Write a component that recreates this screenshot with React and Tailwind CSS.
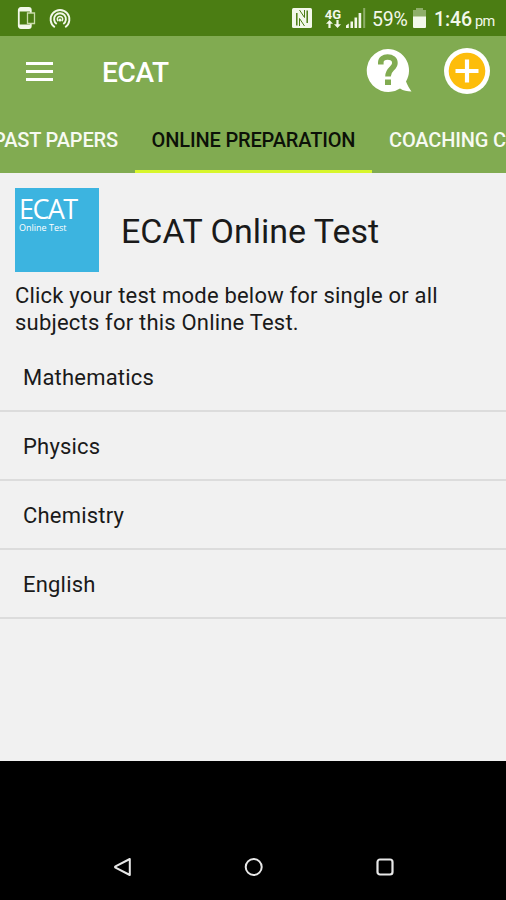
import clsx from "clsx";

const TABS = [
  { label: "PAST PAPERS", className: "w-[135px] justify-end pr-[17px]" },
  {
    label: "ONLINE PREPARATION",
    className: "w-[237px] justify-center",
    active: true,
  },
  { label: "COACHING CENTERS", className: "w-[220px] pl-[17px]" },
];

const SUBJECTS = ["Mathematics", "Physics", "Chemistry", "English"];

function StatusBar() {
  return (
    <div className="flex h-9 items-center bg-[#4b7d13] text-[#f3f8ea]">
      <svg className="ml-[17px] h-6 w-[19px]" viewBox="0 0 19 24" fill="none">
        <rect x="1.800" y="2" width="12" height="20" rx="2" stroke="currentColor" strokeWidth="1.800" />
        <path d="M2 2h12v3.500H2zM2 18.500h12V22H2z" fill="currentColor" />
        <path d="M10.500 7h7v10.500h-7z" fill="#4b7d13" stroke="#c9dba9" strokeWidth="1.300" />
      </svg>
      <svg className="ml-[13px] mt-px h-6 w-[22px]" viewBox="0 0 22 24" fill="none" stroke="currentColor" strokeWidth="1.900">
        <path d="M5.800 20.200a9.400 9.400 0 1 1 10.400 0" />
        <path d="M7.700 17a5.900 5.900 0 1 1 6.600 0" />
        <path d="M9.300 14.200a2.700 2.700 0 1 1 3.400 0" strokeWidth="1.500" />
        <circle cx="11" cy="13" r="1.500" fill="currentColor" stroke="none" />
      </svg>

      <svg className="ml-[221px] h-5 w-5" viewBox="0 0 20 20" fill="none">
        <rect width="20" height="20" rx="1.500" fill="currentColor" />
        <path d="M4.800 17.500V5M15.200 15V2.500" stroke="#4b7d13" strokeWidth="1.500" />
        <path d="M7.500 2l5 7.500V2M7.500 18v-7.500l5 7.500" stroke="#4b7d13" strokeWidth="1" />
      </svg>
      <div className="ml-[12px] flex w-[18px] flex-col items-center">
        <span className="text-[13px] font-bold leading-[11px]">4G</span>
        <svg className="h-2 w-[15px]" viewBox="0 0 15 8" fill="currentColor">
          <path d="M3.500 0 7 3.800H4.600V8H2.400V3.800H0zM11.500 8 15 4.200h-2.400V0h-2.200v4.200H8z" />
        </svg>
      </div>
      <svg className="ml-[4px] h-5 w-[20px]" viewBox="0 0 20 20" fill="currentColor">
        <path d="M0 20v-2.500l2.800-2V20zM4.500 13.500h2.500V20H4.500zM8.500 9.500h2.600V20H8.500zM12.600 5h2.600v15h-2.600z" />
        <path d="M17.200 0h2v20h-2z" opacity="0.400" />
      </svg>
      <span className="ml-[6px] mt-1 w-[36px] whitespace-nowrap text-[19.500px] tracking-[-0.2px]">
        59%
      </span>
      <svg className="ml-[5px] h-5 w-[13px]" viewBox="0 0 13 20" fill="currentColor">
        <path d="M3 0h7v2h3v7H0V2h3z" opacity="0.400" />
        <path d="M0 8.500h13V19a1 1 0 0 1-1 1H1a1 1 0 0 1-1-1z" />
      </svg>
      <div className="ml-[8px] mt-1 flex items-baseline whitespace-nowrap">
        <span className="w-[38px] text-[19.500px] font-medium tracking-[-0.1px]">1:46</span>
        <span className="ml-[3px] text-[14.500px] tracking-[-0.6px]">pm</span>
      </div>
    </div>
  );
}

function Toolbar() {
  return (
    <header className="flex h-[70px] items-center text-white">
      <svg className="ml-[26px] mt-px h-5 w-[27px]" viewBox="0 0 27 20" fill="currentColor">
        <path d="M0 0h27v3H0zM0 8h27v3H0zM0 16h27v3H0z" />
      </svg>
      <h1 className="ml-[49px] mt-[3px] text-[28px] font-medium leading-8 tracking-[-0.3px]">
        ECAT
      </h1>
      <svg className="ml-auto h-11 w-[46px]" viewBox="0 0 46 44">
        <path
          d="M22 0a21.500 21.500 0 1 0 12 39.500c3.500 2.300 7 3 11.500 3-2-3-4.300-6.500-5.500-10A21.500 21.500 0 0 0 22 0z"
          fill="currentColor"
        />
        <path
          d="M14.800 15.500v-2c0-3.700 3-5.500 6.700-5.500 4.600 0 7.400 2.300 7.400 6 0 5.800-6.900 5.500-6.900 13.500"
          fill="none"
          stroke="#81ab51"
          strokeWidth="5.600"
        />
        <path d="M19 30.500h6v5.500h-6z" fill="#81ab51" />
      </svg>
      <svg className="ml-[32px] mr-[16px] h-[46px] w-[46px]" viewBox="0 0 46 46">
        <circle cx="23" cy="23" r="23" fill="currentColor" />
        <circle cx="23" cy="23" r="18.300" fill="#fdbd0b" />
        <path d="M23 11.500v23M11.500 23h23" stroke="currentColor" strokeWidth="4.200" />
      </svg>
    </header>
  );
}

function Tabs() {
  return (
    <nav className="flex h-[67px] overflow-hidden">
      {TABS.map((tab) => (
        <div
          key={tab.label}
          className={clsx(
            "flex shrink-0 items-center whitespace-nowrap border-b-[3px] pt-1 text-[20px] font-medium tracking-[-0.15px]",
            tab.className,
            tab.active
              ? "border-[#d8f62c] text-[#0c1108]"
              : "border-transparent text-[#f7faf2]",
          )}
        >
          {tab.label}
        </div>
      ))}
    </nav>
  );
}

function SystemNav() {
  return (
    <footer className="flex h-[139px] items-end bg-black pb-[23px] text-[#e8e8e8]">
      <svg className="ml-[113px] h-5 w-[20px]" viewBox="0 0 20 20" fill="none" stroke="currentColor" strokeWidth="2" strokeLinejoin="round">
        <path d="M16.800 2v16L2.500 10.700q-1-.7 0-1.400z" />
      </svg>
      <svg className="ml-[111px] h-5 w-[20px]" viewBox="0 0 20 20" fill="none" stroke="currentColor" strokeWidth="2">
        <circle cx="9.700" cy="10" r="8" />
      </svg>
      <svg className="ml-[111px] h-5 w-[20px]" viewBox="0 0 20 20" fill="none" stroke="currentColor" strokeWidth="2.200">
        <rect x="2.500" y="2.500" width="15" height="15" rx="2.500" />
      </svg>
    </footer>
  );
}

export default function App() {
  return (
    <div className="flex h-[900px] w-[506px] flex-col overflow-hidden bg-[#f1f1f1] font-[Roboto,sans-serif] text-[#1a1a1a]">
      <StatusBar />
      <div className="bg-[#81ab51]">
        <Toolbar />
        <Tabs />
      </div>

      <main className="flex-1">
        <div className="flex items-center pl-[15px] pt-[15px]">
          <div className="h-[84px] w-[84px] bg-[#3cb4e0] pl-1 pt-[7px] font-['Open_Sans',sans-serif] text-white">
            <p className="text-[27px] leading-[28px] tracking-[-1.600px]">ECAT</p>
            <p className="text-[9px] leading-[10px]">Online Test</p>
          </div>
          <h2 className="ml-[22px] mt-[2px] text-[34px] leading-10">
            ECAT Online Test
          </h2>
        </div>

        <p className="ml-[15px] mt-[11px] whitespace-nowrap text-[22px] leading-[26.500px] tracking-[0.2px]">
          Click your test mode below for single or all
          <br />
          subjects for this Online Test.
        </p>

        <ul className="mt-[7px]">
          {SUBJECTS.map((subject) => (
            <li
              key={subject}
              className="flex h-[69px] items-center border-b-2 border-[#dcdcdc] pl-[23px] pt-[2px] text-[22px] tracking-[0.2px]"
            >
              {subject}
            </li>
          ))}
        </ul>
      </main>

      <SystemNav />
    </div>
  );
}
